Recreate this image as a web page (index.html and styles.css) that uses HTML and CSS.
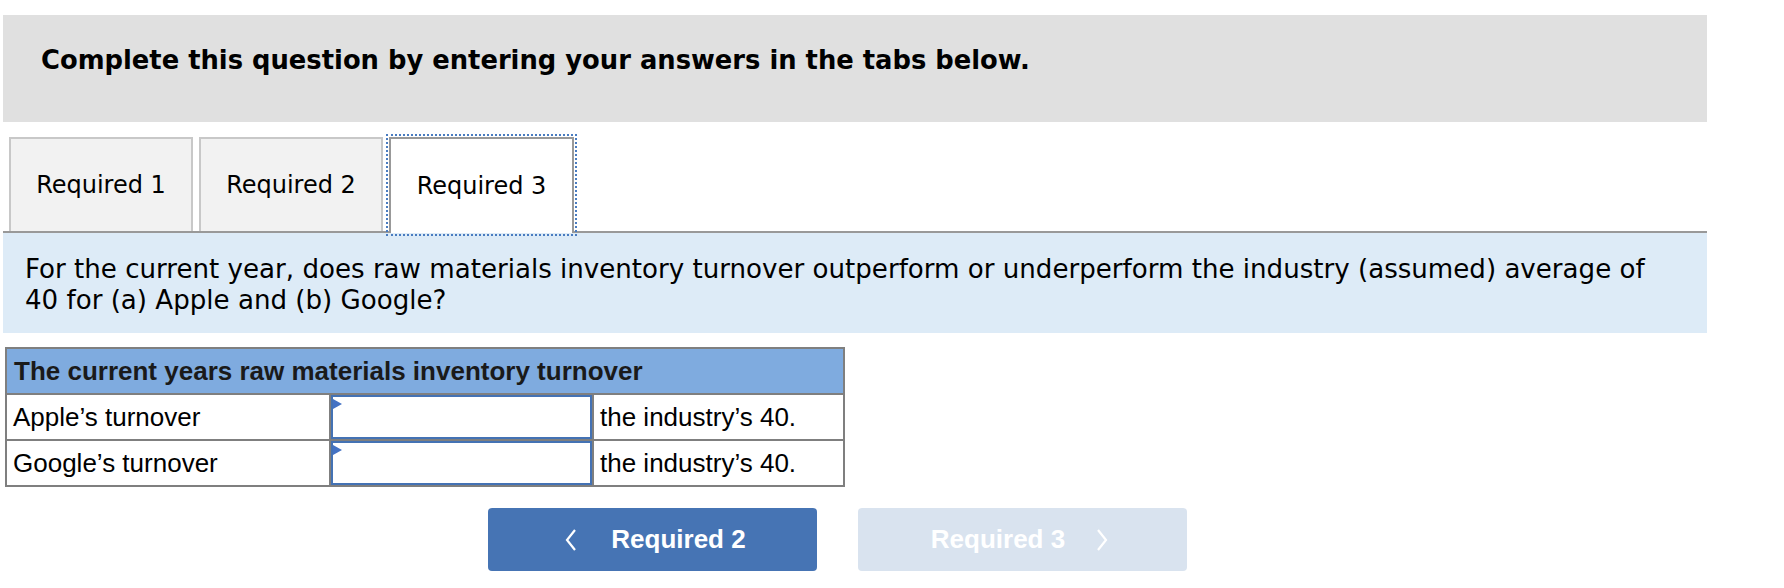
FILE: index.html
```html
<!DOCTYPE html>
<html>
<head>
<meta charset="utf-8">
<link rel="stylesheet" href="styles.css">
</head>
<body>
<div class="page">
  <div class="header">Complete this question by entering your answers in the tabs below.</div>
  <div class="tabs">
    <div class="tab">Required 1</div>
    <div class="tab">Required 2</div>
    <div class="tab active">Required 3</div>
  </div>
  <div class="panel">
    <p class="question">For the current year, does raw materials inventory turnover outperform or underperform the industry (assumed) average of 40 for (a) Apple and (b) Google?</p>
  </div>
  <table class="grid">
    <colgroup>
      <col class="w1"><col class="w2"><col class="w3">
    </colgroup>
    <tr class="head"><th colspan="3">The current years raw materials inventory turnover</th></tr>
    <tr>
      <td class="c1">Apple’s turnover</td>
      <td class="c2"><div class="select"><span class="marker"></span></div></td>
      <td class="c3">the industry’s 40.</td>
    </tr>
    <tr>
      <td class="c1">Google’s turnover</td>
      <td class="c2"><div class="select"><span class="marker"></span></div></td>
      <td class="c3">the industry’s 40.</td>
    </tr>
  </table>
  <div class="nav">
    <div class="btn prev">
      <svg class="chev" width="12" height="22" viewBox="0 0 12 22"><polyline points="10,1 2,11 10,21" fill="none" stroke="#fff" stroke-width="2.2"/></svg>
      <span>Required 2</span>
    </div>
    <div class="btn next">
      <span>Required 3</span>
      <svg class="chev" width="12" height="22" viewBox="0 0 12 22"><polyline points="2,1 10,11 2,21" fill="none" stroke="#fff" stroke-width="2.2"/></svg>
    </div>
  </div>
</div>
</body>
</html>
```
FILE: styles.css
```css
html, body { margin: 0; padding: 0; background: #fff; }
.page { padding: 15px 0 0 3px; width: 1704px; }

.header {
  height: 107px;
  box-sizing: border-box;
  background: #e0e0e0;
  font-family: "DejaVu Sans", Verdana, sans-serif;
  font-weight: bold;
  font-size: 25.8px;
  line-height: 30px;
  color: #000;
  padding: 30px 0 0 38px;
}

.tabs {
  display: flex;
  gap: 6px;
  margin: 15px 0 0 6px;
  height: 94px;
  position: relative;
  z-index: 1;
}
.tab {
  width: 184px;
  box-sizing: border-box;
  border: 2px solid #c8c8c8;
  border-bottom: none;
  background: #f2f2f2;
  font-family: "DejaVu Sans", Verdana, sans-serif;
  font-size: 24px;
  color: #000;
  display: flex;
  align-items: center;
  justify-content: center;
}
.tab.active {
  width: 185px;
  background: #fff;
  border-color: #999;
  height: 96px;
  outline: 2px dotted #4a7cc0;
  outline-offset: 1px;
}

.panel {
  background: #ddebf7;
  border-top: 2px solid #999;
  box-sizing: border-box;
  height: 102px;
  padding: 21px 40px 0 22px;
}
.question {
  margin: 0;
  font-family: "DejaVu Sans", Verdana, sans-serif;
  font-size: 26.1px;
  line-height: 31px;
  color: #000;
}

.grid {
  margin: 14px 0 0 2px;
  width: 838px;
  table-layout: fixed;
  border-collapse: collapse;
  border: 2px solid #7f7f7f;
  font-family: "Liberation Sans", Arial, sans-serif;
  font-size: 26px;
  color: #000;
}
.w1 { width: 324px; }
.w2 { width: 263px; }
.w3 { width: 251px; }
.grid th {
  background: #7fabdf;
  text-align: left;
  font-weight: bold;
  height: 44px;
  padding: 0 7px;
  color: #1a1a1a;
  border-bottom: 2px solid #7f7f7f;
}
.grid td {
  height: 44px;
  padding: 0 6px;
  border: 2px solid #7f7f7f;
  white-space: nowrap;
}
.grid td.c2 { padding: 0; }

.select {
  position: relative;
  height: 44px;
  box-sizing: border-box;
  border: 2px solid #4472b4;
  background: #fff;
}
.marker {
  position: absolute;
  left: 0;
  top: 2px;
  width: 0;
  height: 0;
  border-top: 5px solid transparent;
  border-bottom: 5px solid transparent;
  border-left: 9px solid #4472c4;
}

.nav {
  display: flex;
  gap: 41px;
  margin: 21px 0 0 485px;
}
.btn {
  width: 329px;
  height: 63px;
  box-sizing: border-box;
  border-radius: 4px;
  display: flex;
  align-items: center;
  justify-content: center;
  gap: 34px;
  font-family: "Liberation Sans", Arial, sans-serif;
  font-weight: bold;
  font-size: 26px;
  color: #fff;
}
.btn.prev { background: #4674b4; padding-left: 6px; }
.btn.next { background: #d9e3ef; gap: 31px; padding-right: 6px; }
.chev { display: block; }
```
